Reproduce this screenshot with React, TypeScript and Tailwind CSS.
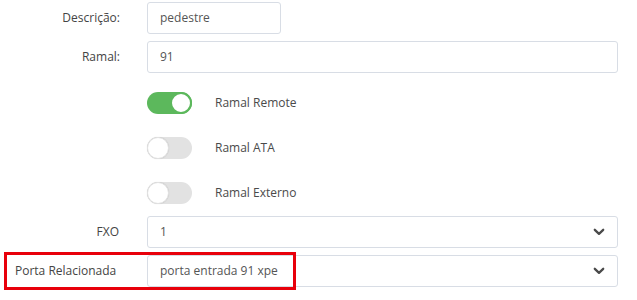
import React from "react";

const Chevron = () => (
  <svg width="12" height="8" viewBox="0 0 12 8" className="absolute right-[12px] top-1/2 -translate-y-1/2">
    <path d="M1.8 1.8 L6 5.8 L10.2 1.8" fill="none" stroke="#4a4a4a" strokeWidth="2.3" strokeLinecap="round" strokeLinejoin="round" />
  </svg>
);

const Toggle = ({ on }: { on: boolean }) =>
  on ? (
    <div className="relative w-[45px] h-[22px] rounded-full bg-[#5cb85c]">
      <div className="absolute right-0 top-0 w-[22px] h-[22px] rounded-full bg-white border-2 border-[#5cb85c]" />
    </div>
  ) : (
    <div className="relative w-[45px] h-[22px] rounded-full bg-[#e2e2e2]">
      <div className="absolute left-0 top-0 w-[22px] h-[22px] rounded-full bg-white border border-[#e2e2e2] shadow-[0_0_1px_rgba(0,0,0,0.15)]" />
    </div>
  );

export default function App() {
  const font = { fontFamily: '"Open Sans", "Noto Sans", sans-serif' };
  return (
    <div className="relative w-[637px] h-[300px] bg-white text-[12px] text-[#444]" style={font}>
      <div className="flex flex-col pt-[2px]">
        <div className="flex items-center h-[32px]">
          <div className="w-[120px] text-right">Descrição:</div>
          <div className="ml-[27px] w-[134px] h-[32px] border border-[#d8dde5] rounded-[3px] flex items-center px-[12px] text-[#555]">pedestre</div>
        </div>
        <div className="flex items-center h-[32px] mt-[7px]">
          <div className="w-[120px] text-right">Ramal:</div>
          <div className="ml-[27px] w-[471px] h-[32px] border border-[#d8dde5] rounded-[3px] flex items-center px-[12px] text-[#555]">91</div>
        </div>
        <div className="flex flex-col gap-[23px] mt-[19px] ml-[147px]">
          <div className="flex items-center h-[22px]">
            <Toggle on />
            <span className="ml-[23px] text-[#4a4a4a]">Ramal Remote</span>
          </div>
          <div className="flex items-center h-[22px]">
            <Toggle on={false} />
            <span className="ml-[23px] text-[#4a4a4a]">Ramal ATA</span>
          </div>
          <div className="flex items-center h-[22px]">
            <Toggle on={false} />
            <span className="ml-[23px] text-[#4a4a4a]">Ramal Externo</span>
          </div>
        </div>
        <div className="flex items-center h-[32px] mt-[12px]">
          <div className="w-[119px] text-right">FXO</div>
          <div className="relative ml-[28px] w-[471px] h-[32px] border border-[#d8dde5] rounded-[3px] flex items-center px-[12px] text-[#555]">
            1
            <Chevron />
          </div>
        </div>
        <div className="flex items-center h-[32px] mt-[7px]">
          <div className="w-[119px] pl-[15px]">Porta Relacionada</div>
          <div className="relative ml-[28px] w-[471px] h-[32px] border border-[#d8dde5] rounded-[3px] flex items-center px-[12px] text-[#555]">
            porta entrada 91 xpe
            <Chevron />
          </div>
        </div>
      </div>
      <div className="absolute left-[4px] top-[252px] w-[292px] h-[38px] border-[3px] border-[#e8000b]" />
    </div>
  );
}
